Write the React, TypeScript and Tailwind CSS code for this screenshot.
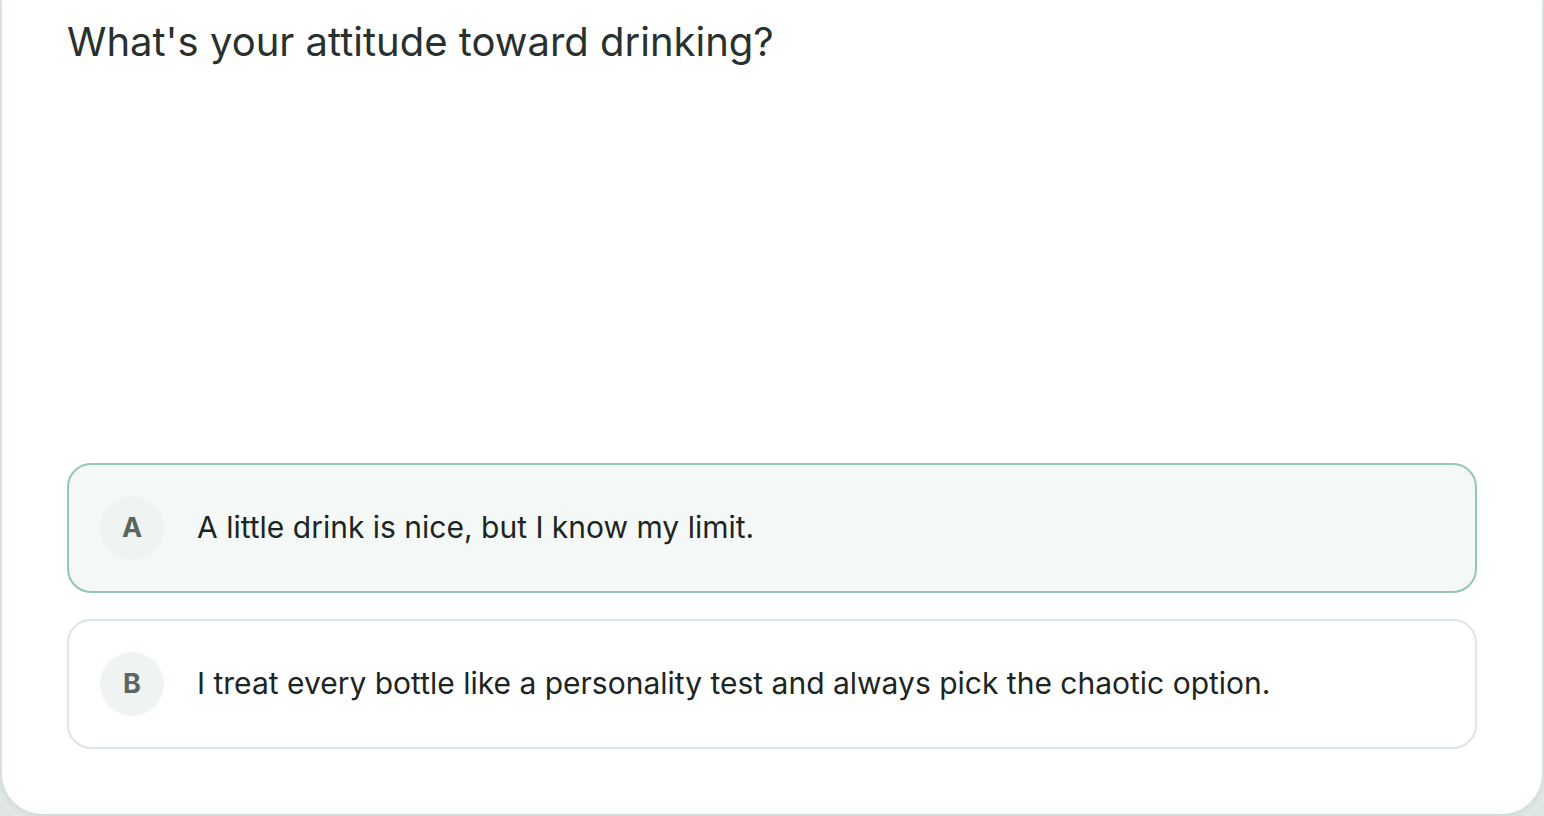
import React from "react";

const options = [
  { key: "A", text: "A little drink is nice, but I know my limit.", selected: true },
  { key: "B", text: "I treat every bottle like a personality test and always pick the chaotic option.", selected: false },
];

export default function App() {
  return (
    <div className="w-full h-[816px] bg-[#dfe7e4] overflow-hidden" style={{ fontFamily: "Inter, 'Noto Sans', sans-serif" }}>
      <div className="mx-[2px] h-[814px] bg-white rounded-b-[40px] shadow-[0_2px_6px_rgba(0,0,0,0.08)] flex flex-col px-[65px] pt-[18px] pb-[65px]">
        <h1 className="text-[40px] leading-[48px] text-[#29312e] font-normal tracking-[0px]">What's your attitude toward drinking?</h1>
        <div className="flex-1" />
        <div className="flex flex-col gap-[26px]">
          {options.map((o) => (
            <div
              key={o.key}
              className={
                o.selected
                  ? "h-[130px] rounded-[24px] border-2 border-[#92c7b4] bg-[#f4f9f7] flex items-center pl-[31px]"
                  : "h-[130px] rounded-[24px] border-2 border-[#dee6e3] bg-white flex items-center pl-[31px]"
              }
            >
              <div className="w-[64px] h-[64px] rounded-full bg-[#eff3f2] flex items-center justify-center text-[27px] font-bold text-[#5b6661] shrink-0">
                {o.key}
              </div>
              <div className="ml-[33px] text-[30px] leading-[36px] text-[#1d2522] -mt-[2px]">{o.text}</div>
            </div>
          ))}
        </div>
      </div>
    </div>
  );
}
